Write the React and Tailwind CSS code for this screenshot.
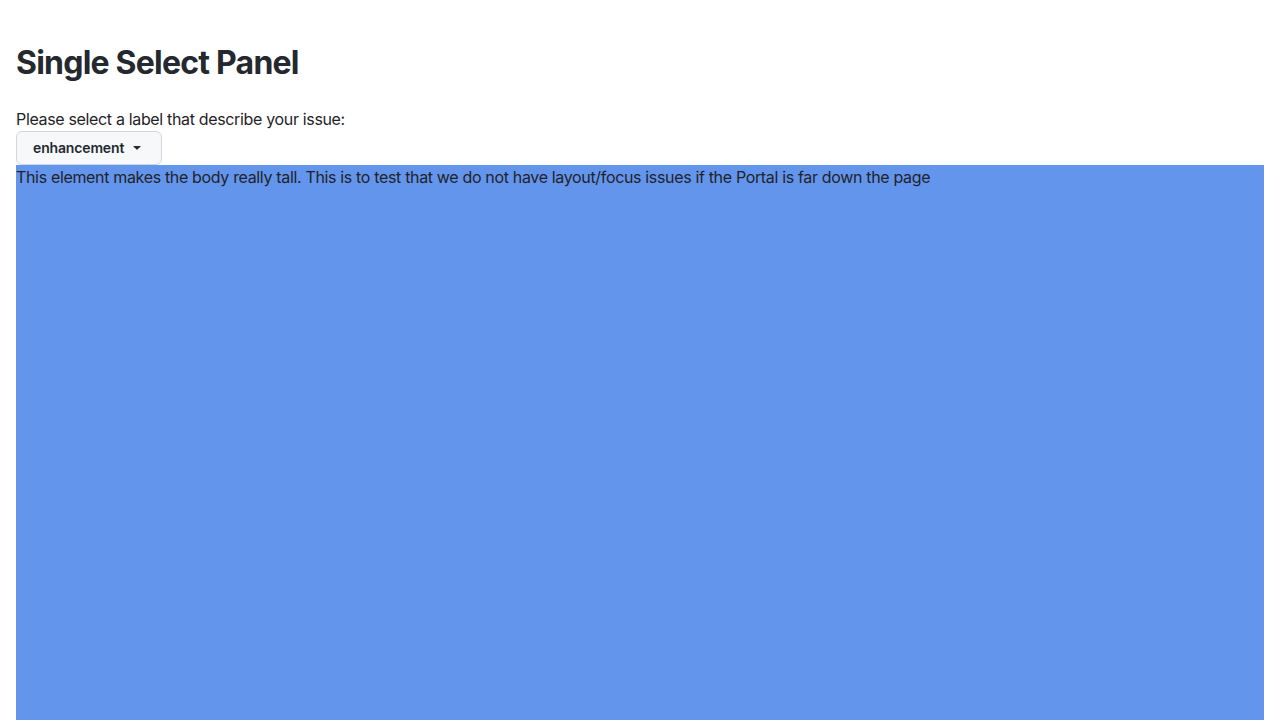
import React from 'react';

const fontStack = { fontFamily: 'Inter, "Noto Sans", "Liberation Sans", sans-serif' };

const Caret = () => (
  <svg width="16" height="16" viewBox="0 0 16 16" className="fill-current">
    <path d="m4.427 7.427 3.396 3.396a.25.25 0 0 0 .354 0l3.396-3.396A.25.25 0 0 0 11.396 7H4.604a.25.25 0 0 0-.177.427Z" />
  </svg>
);

export default function App() {
  return (
    <div className="bg-white min-h-[720px] p-4 text-[#1f2328]" style={fontStack}>
      <h1 className="text-[32px] font-bold leading-[48px] mt-[23px] mb-[20px] tracking-[-0.78px] text-[#24292f]">Single Select Panel</h1>
      <label className="block text-base leading-6 tracking-[-0.34px]">Please select a label that describe your issue:</label>
      <button className="flex items-center gap-1 h-[34px] w-[146px] pl-4 pr-4 pb-[2px] bg-[#f6f8fa] border border-[#d0d7de] rounded-md text-[14px] font-semibold tracking-[-0.15px] text-[#24292f]">
        <span>enhancement</span>
        <span className="ml-[1px]"><Caret /></span>
      </button>
      <div className="bg-[#6495ed] h-[2000px] text-base leading-6 tracking-[-0.34px]">
        This element makes the body really tall. This is to test that we do not have layout/focus issues if the Portal is far down the page
      </div>
    </div>
  );
}
